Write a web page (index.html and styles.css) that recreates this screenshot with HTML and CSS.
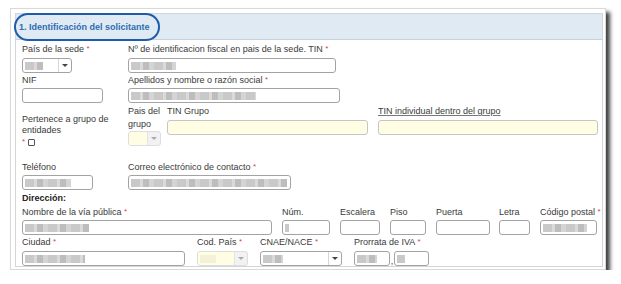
FILE: index.html
```html
<!DOCTYPE html>
<html lang="es">

<head>
    <meta charset='utf-8'>
    <title>Identificación del solicitante</title>
    <link rel="stylesheet" href="styles.css">
</head>

<body>
    <div class='win'>
        <div class='panel'>
            <div class='hd'><span class='oval'>1. Identificación del solicitante</span></div>
            <div class='bd'>
                <div class='row r1'>
                    <div class='f w106'>
                        <label>País de la sede <i>*</i></label>
                        <div class='sel s50'><span class='opt'><b class='val' style='width:18px'></b></span><span class='arr'></span></div>
                    </div>
                    <div class='f'>
                        <label>Nº de identificacion fiscal en pais de la sede. TIN <i>*</i></label>
                        <div class='inp' style='width:208px'><b class='val' style='width:45px'></b></div>
                    </div>
                </div>
                <div class='row r2'>
                    <div class='f w106'>
                        <label>NIF</label>
                        <div class='inp' style='width:81px'></div>
                    </div>
                    <div class='f'>
                        <label>Apellidos y nombre o razón social <i>*</i></label>
                        <div class='inp' style='width:212px'><b class='val' style='width:125px'></b></div>
                    </div>
                </div>
                <div class='row r3'>
                    <div class='f w106 grp'>
                        <label>Pertenece a grupo de<br>entidades<br><i>*</i> <span class='chk'></span></label>
                    </div>
                    <div class='f w39'>
                        <label>Pais del<br>grupo</label>
                        <div class='sel off s33'><span class='opt'></span><span class='arr'></span></div>
                    </div>
                    <div class='f w211'>
                        <label>TIN Grupo</label>
                        <div class='inp yel' style='width:201px'></div>
                    </div>
                    <div class='f'>
                        <label><u>TIN individual dentro del grupo</u></label>
                        <div class='inp yel' style='width:220px'></div>
                    </div>
                </div>
                <div class='row r4'>
                    <div class='f w106'>
                        <label>Teléfono</label>
                        <div class='inp' style='width:71px'><b class='val' style='width:46px'></b></div>
                    </div>
                    <div class='f'>
                        <label>Correo electrónico de contacto <i>*</i></label>
                        <div class='inp' style='width:163px'><b class='val' style='width:156px'></b></div>
                    </div>
                </div>
                <div class='sec'>Dirección:</div>
                <div class='row r5'>
                    <div class='f w260'>
                        <label>Nombre de la vía pública <i>*</i></label>
                        <div class='inp' style='width:250px'><b class='val' style='width:64px'></b></div>
                    </div>
                    <div class='f w58'>
                        <label>Núm.</label>
                        <div class='inp' style='width:48px'><b class='val' style='width:4px'></b></div>
                    </div>
                    <div class='f w50'>
                        <label>Escalera</label>
                        <div class='inp' style='width:40px'></div>
                    </div>
                    <div class='f w46'>
                        <label>Piso</label>
                        <div class='inp' style='width:36px'></div>
                    </div>
                    <div class='f w63'>
                        <label>Puerta</label>
                        <div class='inp' style='width:54px'></div>
                    </div>
                    <div class='f w41'>
                        <label>Letra</label>
                        <div class='inp' style='width:31px'></div>
                    </div>
                    <div class='f'>
                        <label>Código postal <i>*</i></label>
                        <div class='inp' style='width:57px'><b class='val' style='width:44px'></b></div>
                    </div>
                </div>
                <div class='row r6'>
                    <div class='f w175'>
                        <label>Ciudad <i>*</i></label>
                        <div class='inp' style='width:163px'><b class='val' style='width:60px'></b></div>
                    </div>
                    <div class='f w63'>
                        <label>Cod. País <i>*</i></label>
                        <div class='sel off s51'><span class='opt'><b class='val lt' style='width:16px'></b></span><span class='arr'></span></div>
                    </div>
                    <div class='f w94'>
                        <label>CNAE/NACE <i>*</i></label>
                        <div class='sel s82'><span class='opt'><b class='val' style='width:20px'></b></span><span class='arr'></span></div>
                    </div>
                    <div class='f'>
                        <label>Prorrata de IVA <i>*</i></label>
                        <div class='pair'>
                            <div class='inp' style='width:36px'><b class='val' style='width:20px'></b></div>
                            <span class='cm'>,</span>
                            <div class='inp' style='width:35px'><b class='val' style='width:8px'></b></div>
                        </div>
                    </div>
                </div>
            </div>
        </div>
    </div>
</body>

</html>
```

FILE: styles.css
```css
body {
    margin: 0;
    background: #fff;
    color: #3a3a3a;
    font-family: "Liberation Sans", Arial, sans-serif;
    font-size: 9px;
}

.win {
    box-sizing: border-box;
    width: 596px;
    height: 262px;
    margin: 8px 0 0 10px;
    padding: 4px 0 0 4px;
    border: 1px solid #d9d9d9;
    background: #fff;
    box-shadow: 4px 4px 4px rgba(0, 0, 0, 0.75);
}

.panel {
    box-sizing: border-box;
    width: 588px;
    height: 254px;
    border: 1px solid #cfd6dc;
}

.hd {
    display: flex;
    align-items: center;
    height: 25px;
    background: #dfeaf3;
    border-bottom: 1px solid #c5d3df;
}

.oval {
    display: flex;
    align-items: center;
    box-sizing: border-box;
    height: 28px;
    margin: 0 0 0 -2px;
    padding: 0 8px 0 3px;
    border: 2px solid #1d5cab;
    border-radius: 14px;
    color: #2f6cb2;
    font-weight: bold;
}

.bd {
    padding: 2px 0 0 6px;
}

.row {
    display: flex;
}

label {
    display: block;
    line-height: 14px;
    white-space: nowrap;
}

label i {
    color: #d9413a;
    font-style: normal;
    font-size: 8px;
    vertical-align: 1px;
}

label u {
    text-decoration-color: #777;
}

.w39 { width: 39px; }
.w41 { width: 41px; }
.w46 { width: 46px; }
.w50 { width: 50px; }
.w58 { width: 58px; }
.w63 { width: 63px; }
.w94 { width: 94px; }
.w106 { width: 106px; }
.w175 { width: 175px; }
.w211 { width: 211px; }
.w260 { width: 260px; }

.inp,
.sel {
    display: flex;
    align-items: center;
    box-sizing: border-box;
    height: 15px;
    margin-top: 1px;
    border: 1px solid #a3a3a3;
    border-radius: 3px;
    background: #fff;
}

.yel {
    background: #fffde3;
    border-color: #c6c6c6;
}

.val {
    display: block;
    height: 8px;
    margin-left: 2px;
    background: repeating-linear-gradient(90deg, #c9c9c9 0 9px, #dadada 9px 12px, #bdbdbd 12px 18px, #d4d4d4 18px 23px);
    filter: blur(0.7px);
}

.val.lt {
    background: #f3f1d8;
}

.sel .opt {
    display: flex;
    align-items: center;
    flex: 1;
    height: 100%;
}

.sel .arr {
    position: relative;
    width: 12px;
    height: 100%;
    border-left: 1px solid #d6d6d6;
}

.sel .arr::after {
    content: '';
    position: absolute;
    left: 3px;
    top: 5px;
    border: 3px solid transparent;
    border-top: 3px solid #444;
    border-bottom: 0;
}

.s33 { width: 33px; }
.s50 { width: 50px; }
.s51 { width: 51px; }
.s82 { width: 82px; }

.sel.off {
    border-color: #dedede;
    background: #f2f2f2;
}

.sel.off .opt {
    background: #fffde3;
    border-radius: 2px 0 0 2px;
}

.sel.off .arr {
    border-left-color: #e4e4e4;
}

.sel.off .arr::after {
    border-top-color: #aaa;
}

.r1 .inp,
.r1 .sel {
    margin-top: 2px;
}

.r2 {
    margin-bottom: 2px;
}

.r3 label {
    line-height: 13px;
}

.r3 .inp {
    margin-top: 2px;
}

.r3 .sel {
    margin-top: 0;
}

.grp label {
    padding-top: 9px;
    line-height: 11px;
}

.chk {
    display: inline-block;
    box-sizing: border-box;
    width: 7px;
    height: 7px;
    border: 1px solid #555;
    border-radius: 1px;
    vertical-align: -1px;
}

.r3 {
    margin-bottom: 12px;
}

.sec {
    margin-top: 2px;
    line-height: 13px;
    font-weight: bold;
    color: #222;
}

.r6 .inp,
.r6 .sel {
    margin-top: 2px;
}

.pair {
    display: flex;
    align-items: flex-end;
}

.cm {
    width: 4px;
    line-height: 10px;
    text-align: center;
}
```
